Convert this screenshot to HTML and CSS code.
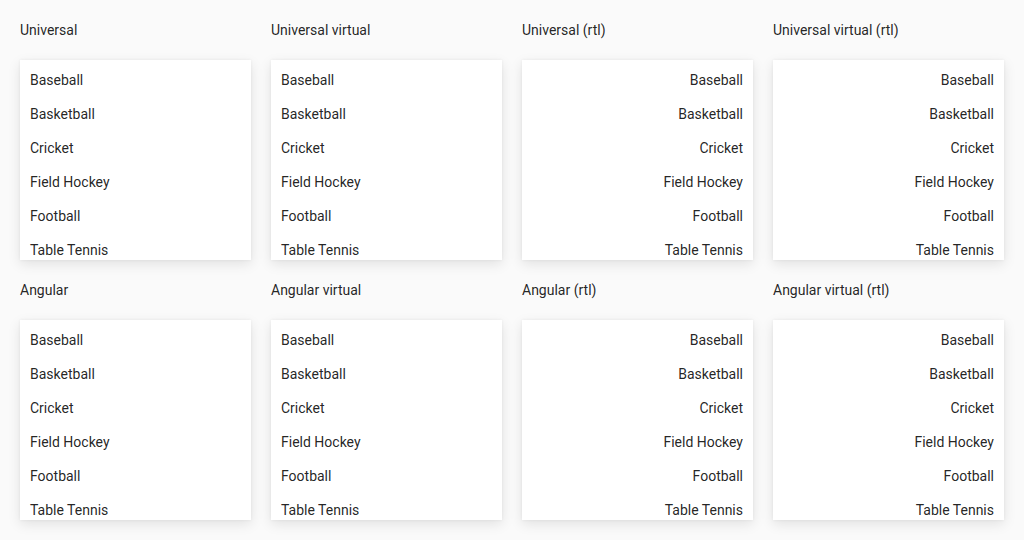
FILE: index.html
```html
<!DOCTYPE html>
<html>
<head>
<meta charset="utf-8">
<link rel="stylesheet" href="styles.css">
</head>
<body>
<div class="grid">
  <section class="demo"><h2 class="title">Universal</h2><ul class="list"><li>Baseball</li><li>Basketball</li><li>Cricket</li><li>Field Hockey</li><li>Football</li><li>Table Tennis</li></ul></section>
  <section class="demo"><h2 class="title">Universal virtual</h2><ul class="list"><li>Baseball</li><li>Basketball</li><li>Cricket</li><li>Field Hockey</li><li>Football</li><li>Table Tennis</li></ul></section>
  <section class="demo"><h2 class="title">Universal (rtl)</h2><ul class="list rtl"><li>Baseball</li><li>Basketball</li><li>Cricket</li><li>Field Hockey</li><li>Football</li><li>Table Tennis</li></ul></section>
  <section class="demo"><h2 class="title">Universal virtual (rtl)</h2><ul class="list rtl"><li>Baseball</li><li>Basketball</li><li>Cricket</li><li>Field Hockey</li><li>Football</li><li>Table Tennis</li></ul></section>
  <section class="demo"><h2 class="title">Angular</h2><ul class="list"><li>Baseball</li><li>Basketball</li><li>Cricket</li><li>Field Hockey</li><li>Football</li><li>Table Tennis</li></ul></section>
  <section class="demo"><h2 class="title">Angular virtual</h2><ul class="list"><li>Baseball</li><li>Basketball</li><li>Cricket</li><li>Field Hockey</li><li>Football</li><li>Table Tennis</li></ul></section>
  <section class="demo"><h2 class="title">Angular (rtl)</h2><ul class="list rtl"><li>Baseball</li><li>Basketball</li><li>Cricket</li><li>Field Hockey</li><li>Football</li><li>Table Tennis</li></ul></section>
  <section class="demo"><h2 class="title">Angular virtual (rtl)</h2><ul class="list rtl"><li>Baseball</li><li>Basketball</li><li>Cricket</li><li>Field Hockey</li><li>Football</li><li>Table Tennis</li></ul></section>
</div>
</body>
</html>
```
FILE: styles.css
```css
html, body {
  margin: 0;
  padding: 0;
  background: #fafafa;
  font-family: Roboto, "Liberation Sans", sans-serif;
  font-size: 14px;
  color: rgba(0, 0, 0, 0.87);
}
.grid {
  display: grid;
  grid-template-columns: repeat(4, 231px);
  column-gap: 20px;
  row-gap: 20px;
  padding: 20px;
}
.demo {
  display: flex;
  flex-direction: column;
  gap: 20px;
}
.title {
  margin: 0;
  font-size: 14px;
  font-weight: 400;
  line-height: 20px;
}
.list {
  margin: 0;
  padding: 3px 0 0;
  list-style: none;
  height: 197px;
  overflow: hidden;
  background: #fff;
  box-shadow: 0 4px 12px rgba(0, 0, 0, 0.1), 0 0 3px rgba(0, 0, 0, 0.06);
}
.list li {
  line-height: 34px;
  height: 34px;
  padding: 0 10px;
  white-space: nowrap;
}
.list li:last-child {
  height: 28px;
  line-height: 34px;
  overflow: visible;
}
.list.rtl {
  direction: rtl;
}
```
